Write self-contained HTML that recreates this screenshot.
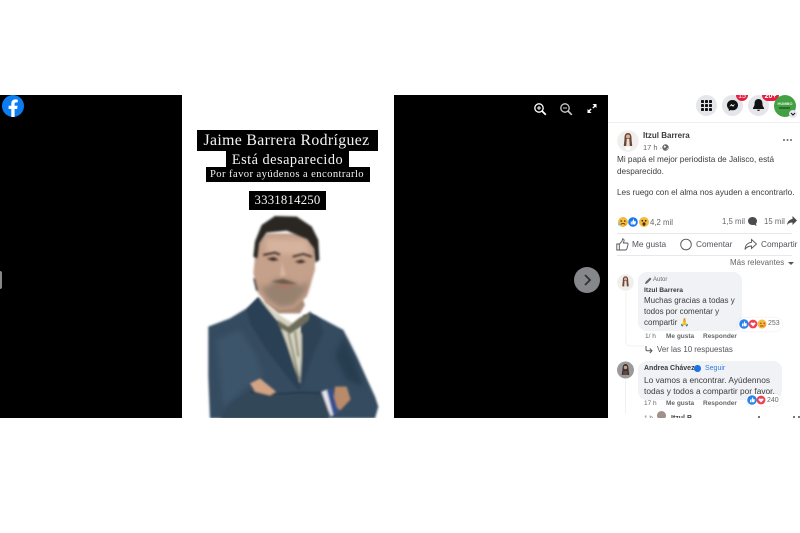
<!DOCTYPE html>
<html lang="es"><head><meta charset="utf-8"><style>
html,body{margin:0;padding:0;background:#fff}
#p{position:relative;width:800px;height:533px;overflow:hidden;background:#fff;font-family:"Liberation Sans",sans-serif;filter:blur(.3px)}
#p div,#p span.a{position:absolute;white-space:nowrap}
.b{background:#000}
.s{font-family:"Liberation Serif",serif;color:#f4f4f4;text-align:center}
.t{font-size:8.200px;color:#3a3b3d;line-height:12px}
.g{color:#65676b}
.h{font-weight:bold}
svg{position:absolute;overflow:visible}
</style></head><body><div id="p">
<div class="b" style="left:0;top:95px;width:182px;height:323px"></div>
<div class="b" style="left:394px;top:95px;width:214px;height:323px"></div>
<div style="left:0;top:271px;width:2px;height:18px;background:#888;border-radius:0 9px 9px 0"></div>
<svg style="left:2px;top:95px" width="22" height="22" viewBox="0 0 22 22"><circle cx="11" cy="11" r="11" fill="#0b7cf2"/><path d="M9.3 22v-8H6.6v-3.2h2.7V8.700c0-2.800 1.600-4.300 4.100-4.300.8 0 1.700.1 2.300.2v2.800h-1.400c-1.300 0-1.700.8-1.700 1.600v1.800h3l-.5 3.200h-2.500v8z" fill="#fff"/></svg>

<div class="b" style="left:197px;top:130px;width:181px;height:21px"></div>
<div class="b" style="left:226px;top:151px;width:123px;height:16px"></div>
<div class="b" style="left:206px;top:167px;width:164px;height:15px"></div>
<div class="b" style="left:249px;top:191px;width:77px;height:19px"></div>
<div class="s" style="left:196px;top:131px;width:181px;font-size:15.800px;line-height:20px;letter-spacing:.35px">Jaime Barrera Rodríguez</div>
<div class="s" style="left:226px;top:151px;width:123px;font-size:14.300px;line-height:18px;letter-spacing:.5px">Está desaparecido</div>
<div class="s" style="left:205px;top:168px;width:164px;font-size:10.600px;line-height:14px;letter-spacing:.42px">Por favor ayúdenos a encontrarlo</div>
<div class="s" style="left:249px;top:191px;width:77px;font-size:12.800px;line-height:19px;letter-spacing:.2px">3331814250</div>

<svg style="left:0;top:0" width="800" height="533" viewBox="0 0 800 533"><defs><filter id="f" x="-10%" y="-10%" width="120%" height="120%"><feGaussianBlur stdDeviation="3"/></filter><filter id="f2" x="-20%" y="-20%" width="140%" height="140%"><feGaussianBlur stdDeviation="8"/></filter><clipPath id="c"><rect x="-20" y="-20" width="620" height="645"/></clipPath></defs>
<g transform="translate(200 210) scale(.33333)" clip-path="url(#c)">
<g filter="url(#f)">
<path d="M25 350L90 325 140 295 175 262 240 340 300 375 310 315 345 315 430 360 470 440 525 560 535 590 525 625H30L25 500z" fill="#344c61"/>
</g>
<g filter="url(#f2)">
<path d="M50 390L120 360 165 430 190 500 140 530 70 590z" fill="#3c556a"/>
<path d="M430 380L465 450 490 530 440 510 405 440z" fill="#283d50"/>
</g>
<g filter="url(#f)">
<path d="M175 262L140 300 150 340 200 420 270 510 300 545 300 520 260 400 235 340z" fill="#2a3f54"/>
<path d="M310 320L330 305 360 330 370 370 345 420 310 520 305 545 305 440 300 380z" fill="#2d4256"/>
<path d="M175 262L235 335 260 400 300 520 305 440 305 375 295 350 230 310z" fill="#d4d2bf"/>
<path d="M265 370L282 440 298 510M285 365L295 440" stroke="#77795f" stroke-width="5" fill="none"/>
<path d="M230 328L265 350 300 322 330 310 325 332 300 352 270 372 238 352z" fill="#6e6c5a"/>
<path d="M195 275L235 310 300 310 315 285 300 250 200 250z" fill="#a98a76"/>
<path d="M150 545L240 558 385 552 385 625 60 625 90 580z" fill="#304659"/>
<path d="M150 545L240 552 300 548 380 550" stroke="#1f3040" stroke-width="4" fill="none"/>
<path d="M150 520L180 505 228 545 210 556 165 545z" fill="#d2a385"/>
<path d="M405 530L440 530 452 568 420 602 400 580z" fill="#b98b6b"/>
<path d="M365 545L382 538 410 610 392 620z" fill="#e6e6ee"/>
<path d="M380 540L395 535 415 605 400 618z" fill="#34508f"/>
</g>
<g filter="url(#f)">
<path d="M165 140L160 190 175 250 200 280 240 300 280 295 320 260 345 180 345 100 300 70 200 70 175 100z" fill="#c5a08a"/>
</g>
<g filter="url(#f2)">
<path d="M195 85L320 90 330 135 200 130z" fill="#d6b39e"/>
<path d="M178 225L203 268 240 292 280 286 316 248 328 210 305 228 270 212 230 206 198 232z" fill="#97826f"/>
</g>
<g filter="url(#f)">
<path d="M214 215L250 207 292 222 250 222z" fill="#6f5a4a"/>
<path d="M222 229L255 226 285 229 255 238z" fill="#ad7666"/>
<path d="M200 146L222 141 236 150 218 153z M284 155L305 149 318 156 300 160z" fill="#3d2c25"/>
<path d="M190 135L225 128 240 134M278 140L310 132 335 140" stroke="#30221c" stroke-width="5" fill="none"/>
<path d="M245 155L258 195 240 200z" fill="#d6b5a0"/>
<path d="M160 140L165 95 185 45 225 18 290 20 335 50 355 90 358 150 346 158 342 115 322 88 260 62 200 68 178 100 172 145z" fill="#292524"/>
<path d="M160 205L168 240 175 245 165 205z" fill="#332b28"/>
</g>
</g></svg>

<svg style="left:533px;top:102px" width="66" height="14" viewBox="0 0 66 14" fill="none" stroke="#fff" stroke-width="1.300"><circle cx="6" cy="6" r="4.200"/><path d="M9 9l3.800 3.800" stroke-width="1.800"/><path d="M4 6h4M6 4v4" stroke-width="1"/><g stroke="#ccc"><circle cx="32" cy="6" r="4.200"/><path d="M35 9l3.800 3.800" stroke-width="1.600"/><path d="M30 6h4" stroke-width="1"/></g><path d="M59.500 1.500h4v4l-1.300-1.300-1.800 1.800-1-1 1.800-1.800zM58.500 10.500h-4v-4l1.300 1.300 1.800-1.800 1 1-1.800 1.800z" fill="#fff" stroke="none" transform="translate(0 .5)"/></svg>
<div style="left:574px;top:267px;width:26px;height:26px;border-radius:50%;background:#85878a"></div>
<svg style="left:574px;top:267px" width="26" height="26" viewBox="0 0 26 26" fill="none"><path d="M11 8l5 5-5 5" stroke="#2e3033" stroke-width="1.800"/></svg>

<!-- Top bar -->
<div style="left:608px;top:122px;width:192px;height:1px;background:#eceef0"></div>
<div style="left:696px;top:95px;width:21px;height:21px;border-radius:50%;background:#e4e6eb"></div>
<svg style="left:701px;top:100px" width="11" height="11" viewBox="0 0 11 11" fill="#111"><rect x="0" y="0" width="3" height="3" rx=".8"/><rect x="4" y="0" width="3" height="3" rx=".8"/><rect x="8" y="0" width="3" height="3" rx=".8"/><rect x="0" y="4" width="3" height="3" rx=".8"/><rect x="4" y="4" width="3" height="3" rx=".8"/><rect x="8" y="4" width="3" height="3" rx=".8"/><rect x="0" y="8" width="3" height="3" rx=".8"/><rect x="4" y="8" width="3" height="3" rx=".8"/><rect x="8" y="8" width="3" height="3" rx=".8"/></svg>
<div style="left:722px;top:95px;width:21px;height:21px;border-radius:50%;background:#e4e6eb"></div>
<svg style="left:727px;top:100px" width="11" height="11" viewBox="0 0 11 11"><path d="M5.500 0C2.400 0 0 2.200 0 5.200c0 1.600.7 2.900 1.800 3.800V11l1.900-1c.6.200 1.200.3 1.800.3 3.100 0 5.500-2.200 5.500-5.100S8.600 0 5.500 0z" fill="#111"/><path d="M2.300 6.800l2-2.800 1.600 1.300 2.200-1.300-2 2.800-1.600-1.300z" fill="#fff"/></svg>
<div style="left:748px;top:95px;width:21px;height:21px;border-radius:50%;background:#e4e6eb"></div>
<svg style="left:753px;top:99px" width="11" height="13" viewBox="0 0 11 13" fill="#111"><path d="M5.500 0C3 0 1.600 1.900 1.600 4.300c0 2.600-.8 3.600-1.600 4.700v1h11V9c-.8-1.100-1.600-2.100-1.600-4.700C9.400 1.900 8 0 5.500 0z"/><path d="M3.800 10.800a1.800 1.800 0 0 0 3.400 0z"/></svg>
<div style="left:736px;top:95px;width:12px;height:6px;border-radius:0 0 6px 6px;background:#e41e3f;overflow:hidden"><span class="a" style="left:0;top:-3px;width:12px;font-size:7px;line-height:9px;color:#fff;text-align:center">15</span></div>
<div style="left:762px;top:95px;width:17px;height:6px;border-radius:0 0 6px 6px;background:#e41e3f;overflow:hidden"><span class="a" style="left:0;top:-3px;width:17px;font-size:7px;line-height:9px;color:#fff;text-align:center;font-weight:bold">20+</span></div>
<div style="left:774px;top:95px;width:22px;height:22px;border-radius:50%;background:#43a144"></div>
<div style="left:774px;top:101px;width:22px;font-size:4px;line-height:6px;color:#e8f4e8;text-align:center;font-weight:bold">HUMBO</div>
<div style="left:779px;top:107px;width:11px;height:1.500px;background:#2c6b2e"></div>
<div style="left:789px;top:110px;width:8px;height:8px;border-radius:50%;background:#e4e6eb"></div>
<svg style="left:789px;top:110px" width="8" height="8" viewBox="0 0 8 8" fill="none"><path d="M2 3l2 2 2-2" stroke="#111" stroke-width="1"/></svg>

<!-- Post header -->
<svg style="left:617px;top:130px" width="22" height="22" viewBox="0 0 22 22"><circle cx="11" cy="11" r="10.800" fill="#f1efed"/><path d="M7.500 8c0-3.500 1.300-5 3.500-5s3.500 1.500 3.500 5c0 3 .7 6 .7 8l-8.400 0c0-2 .7-5 .7-8z" fill="#6a4636"/><circle cx="11" cy="6.500" r="2" fill="#d9b09a"/><path d="M9.700 9h2.600l.5 7.500h-3.600z" fill="#eadfd8"/><path d="M8.500 16.500h5l-.5 3.500h-4z" fill="#fff"/></svg>
<div class="t h" style="left:643px;top:130px;font-size:8px;color:#3a3b3d;line-height:12px">Itzul Barrera</div>
<div class="t g" style="left:643px;top:142px;font-size:7.500px;line-height:11px">17 h ·</div>
<svg style="left:662px;top:144px" width="7" height="7" viewBox="0 0 7 7"><circle cx="3.500" cy="3.500" r="3.200" fill="#65676b"/><path d="M2 1.500l2 .7-.7 1.600-1.500-.3zM5 4l1 .5-1.500 1.500z" fill="#fff"/></svg>
<div style="left:783px;top:139px;width:2.400px;height:2.400px;border-radius:50%;background:#65676b;box-shadow:3.500px 0 0 #65676b,7px 0 0 #65676b"></div>

<div class="t" style="left:617px;top:154px;line-height:12px">Mi papá el mejor periodista de Jalisco, está<br>desparecido.</div>
<div class="t" style="left:617px;top:187px;line-height:12px">Les ruego con el alma nos ayuden a encontrarlo.</div>

<!-- Reactions -->
<svg style="left:617px;top:216px" width="32" height="12" viewBox="0 0 32 12"><circle cx="27" cy="6" r="5" fill="#f5b93d"/><circle cx="25.300" cy="4.800" r=".9" fill="#333"/><circle cx="28.700" cy="4.800" r=".9" fill="#333"/><ellipse cx="27" cy="8" rx="1.500" ry="1.800" fill="#4a2a15"/><circle cx="16" cy="6" r="5.200" fill="#fff"/><circle cx="16" cy="6" r="4.800" fill="#1877f2"/><path d="M13.700 5.500h1.100v3h-1.100zM15.200 5.500l1.200-2.300c.7 0 .9.600.7 1.300l-.2.800h1.500c.5 0 .6.400.5.800l-.5 2c-.1.300-.3.400-.7.400h-2.500z" fill="#fff"/><circle cx="6" cy="6" r="5" fill="#f5b93d"/><circle cx="4.200" cy="5" r=".8" fill="#333"/><circle cx="7.800" cy="5" r=".8" fill="#333"/><path d="M3.800 8.500c1-1.200 3.400-1.200 4.400 0" stroke="#4a2a15" fill="none" stroke-width=".9"/><path d="M2 6.500c-1 1.500-1 2.800 0 3 1 .1 1.200-1.500 0-3z" fill="#5db0f0"/></svg>
<div class="t g" style="left:650px;top:216px;font-size:7.800px;line-height:13px">4,2 mil</div>
<div class="t g" style="left:722px;top:215px;font-size:7.800px;line-height:13px">1,5 mil</div>
<svg style="left:748px;top:217px" width="9" height="9" viewBox="0 0 9 9"><path d="M4.500 0C2 0 0 1.800 0 4s2 4 4.500 4c.6 0 1.100-.1 1.600-.3L8.500 9 8 6.700C8.600 5.900 9 5 9 4 9 1.800 7 0 4.500 0z" fill="#4a4c50"/></svg>
<div class="t g" style="left:764px;top:215px;font-size:7.800px;line-height:13px">15 mil</div>
<svg style="left:787px;top:216px" width="10" height="10" viewBox="0 0 10 10"><path d="M5.500 0l4.500 4.500L5.500 9V6.500C3 6.500 1.300 7.300 0 9c.3-3 2-5.500 5.500-6z" fill="#4a4c50"/></svg>
<div style="left:617px;top:233px;width:175px;height:1px;background:#e6e8ea"></div>

<svg style="left:616px;top:238px" width="13" height="13" viewBox="0 0 13 13" fill="none" stroke="#555" stroke-width=".9"><path d="M.8 6h2.500v6H.8zM3.300 6.300L6 3.200 6.600.8c1.300 0 1.800 1.200 1.300 2.600L7.400 5h3.600c.9 0 1.300.8 1 1.600l-1.200 4.400c-.2.600-.6 1-1.300 1H3.300"/></svg>
<div class="t" style="left:632px;top:238px;font-size:8.300px;line-height:13px;color:#52545a">Me gusta</div>
<svg style="left:680px;top:238px" width="12" height="13" viewBox="0 0 12 13" fill="none" stroke="#555" stroke-width=".9"><circle cx="6" cy="6.500" r="5.300"/></svg>
<div class="t" style="left:696px;top:238px;font-size:8.300px;line-height:13px;color:#52545a">Comentar</div>
<svg style="left:744px;top:238px" width="13" height="13" viewBox="0 0 13 13" fill="none" stroke="#555" stroke-width=".9"><path d="M7.500 1.500l5 4.500-5 4.500V8C4.500 8 2.500 9 1 11.500 1.300 7.500 3.500 4.800 7.500 4.300z"/></svg>
<div class="t" style="left:761px;top:238px;font-size:8.300px;line-height:13px;color:#52545a">Compartir</div>
<div style="left:617px;top:255px;width:175px;height:1px;background:#e6e8ea"></div>
<div class="t g" style="left:730px;top:257px;font-size:8px;line-height:12px">Más relevantes</div>
<div style="left:788px;top:262px;width:0;height:0;border:3px solid transparent;border-top:3.500px solid #555;border-bottom:0"></div>

<!-- Comment 1 -->
<svg style="left:617px;top:274px" width="17" height="17" viewBox="0 0 22 22"><circle cx="11" cy="11" r="10.800" fill="#f1efed"/><path d="M7.500 8c0-3.500 1.300-5 3.500-5s3.500 1.500 3.500 5c0 3 .7 6 .7 8l-8.400 0c0-2 .7-5 .7-8z" fill="#6a4636"/><circle cx="11" cy="6.500" r="2" fill="#d9b09a"/><path d="M9.700 9h2.600l.5 7.500h-3.600z" fill="#eadfd8"/></svg>
<svg style="left:625px;top:292px" width="22" height="58" viewBox="0 0 22 58" fill="none"><path d="M1 0v50c0 3 2 4 6 4h12" stroke="#f0f1f3"/></svg>
<div style="left:638px;top:272px;width:104px;height:59px;background:#f0f2f5;border-radius:9px"></div>
<svg style="left:645px;top:277px" width="7" height="7" viewBox="0 0 7 7"><path d="M0 7l.5-2L5 .5 6.500 2 2 6.500z" fill="#65676b"/></svg>
<div class="t g" style="left:653px;top:276px;font-size:6px;line-height:8px">Autor</div>
<div class="t h" style="left:644px;top:286px;font-size:6.700px;line-height:9px;color:#3a3b3d">Itzul Barrera</div>
<div class="t" style="left:644px;top:295px;font-size:8px;line-height:11px">Muchas gracias a todas y<br>todos por comentar y<br>compartir 🙏</div>
<div style="left:738px;top:318px;width:44px;height:13px;background:#fff;border-radius:7px;box-shadow:0 0 2px rgba(0,0,0,.1)"></div>
<svg style="left:739px;top:319px" width="28" height="10" viewBox="0 0 28 10"><circle cx="23" cy="5" r="4.500" fill="#f5b93d"/><path d="M21 4l1.500.5M26 4l-1.500.5" stroke="#8a4a20"/><path d="M21 7h3.500" stroke="#8a4a20"/><path d="M25 5.500c1.200-.4 2 .3 1.800 1.300-.2.800-1 1-1.800.7z" fill="#f28a3e"/><circle cx="14" cy="5" r="4.800" fill="#fff"/><circle cx="14" cy="5" r="4.400" fill="#ef3f55"/><path d="M14 7.500L11.800 5.300c-1-1.200.8-2.700 2.200-1.200 1.400-1.500 3.200 0 2.200 1.200z" fill="#fff"/><circle cx="5" cy="5" r="4.800" fill="#2a82ef"/><path d="M3 4.600h1v2.800H3zM4.400 4.600l1.100-2.200c.6 0 .8.500.6 1.200l-.1.700h1.300c.5 0 .6.400.5.700l-.4 1.900c-.1.300-.3.400-.6.400H4.400z" fill="#fff"/></svg>
<div class="t g" style="left:768px;top:319px;font-size:7px;line-height:10px">253</div>
<div class="t g" style="left:645px;top:332px;font-size:6.500px;line-height:10px">1/ h</div>
<div class="t h g" style="left:666px;top:332px;font-size:6.500px;line-height:10px">Me gusta</div>
<div class="t h g" style="left:703px;top:332px;font-size:6.500px;line-height:10px">Responder</div>
<svg style="left:645px;top:346px" width="8" height="8" viewBox="0 0 8 8" fill="none" stroke="#555" stroke-width="1"><path d="M1 0v3.500c0 .8.500 1.200 1.200 1.200H7M4.800 2.500L7 4.700 4.800 7"/></svg>
<div class="t" style="left:657px;top:344px;font-size:7.900px;line-height:12px;color:#52545a">Ver las 10 respuestas</div>

<!-- Comment 2 -->
<svg style="left:617px;top:361px" width="17" height="18" viewBox="0 0 17 18"><circle cx="8.500" cy="9" r="8.500" fill="#9a9a9c"/><path d="M5.500 8c0-3 1-5 3-5s3 2 3 5c0 2 .7 4 .7 6H4.800c0-2 .7-4 .7-6z" fill="#3e2f2a"/><circle cx="8.500" cy="6.500" r="1.700" fill="#caa08c"/><path d="M6.500 10h4l.5 4H6z" fill="#5b4b46"/></svg>
<div style="left:625px;top:380px;width:1px;height:34px;background:#f0f1f3"></div>
<div style="left:638px;top:361px;width:144px;height:39px;background:#f0f2f5;border-radius:9px"></div>
<div class="t h" style="left:644px;top:364px;font-size:7px;line-height:10px;color:#3a3b3d">Andrea Chávez</div>
<div style="left:694px;top:365px;width:6.500px;height:6.500px;border-radius:50%;background:#1b74e4"></div>
<div class="t" style="left:705px;top:364px;font-size:7px;line-height:10px;color:#2f7fe0">Seguir</div>
<div class="t" style="left:644px;top:375px;font-size:8.350px;line-height:10.500px">Lo vamos a encontrar. Ayúdennos<br>todas y todos a compartir por favor.</div>
<div style="left:746px;top:394px;width:35px;height:12px;background:#fff;border-radius:7px;box-shadow:0 0 2px rgba(0,0,0,.1)"></div>
<svg style="left:747px;top:395px" width="19" height="10" viewBox="0 0 19 10"><circle cx="14" cy="5" r="4.800" fill="#fff"/><circle cx="14" cy="5" r="4.400" fill="#ef3f55"/><path d="M14 7.500L11.800 5.300c-1-1.200.8-2.700 2.200-1.200 1.400-1.500 3.200 0 2.200 1.200z" fill="#fff"/><circle cx="5" cy="5" r="4.800" fill="#2a82ef"/><path d="M3 4.600h1v2.800H3zM4.400 4.600l1.100-2.200c.6 0 .8.500.6 1.200l-.1.700h1.300c.5 0 .6.400.5.700l-.4 1.900c-.1.300-.3.400-.6.400H4.400z" fill="#fff"/></svg>
<div class="t g" style="left:767px;top:396px;font-size:7px;line-height:10px">240</div>
<div class="t g" style="left:644px;top:399px;font-size:6.500px;line-height:10px">17 h</div>
<div class="t h g" style="left:666px;top:399px;font-size:6.500px;line-height:10px">Me gusta</div>
<div class="t h g" style="left:703px;top:399px;font-size:6.500px;line-height:10px">Responder</div>
<div style="left:608px;top:411px;width:192px;height:7px;overflow:hidden">
<span class="a" style="left:36px;top:3px;font-size:6.500px;line-height:10px;color:#65676b">1 h</span>
<span class="a" style="left:49px;top:0;width:9px;height:9px;border-radius:50%;background:#a0908a"></span>
<span class="a" style="left:63px;top:3px;font-size:7px;line-height:10px;color:#3a3b3d;font-weight:bold">Itzul B</span>
<span class="a" style="left:150px;top:5px;width:2px;height:2px;background:#777"></span>
<span class="a" style="left:185px;top:5px;width:2px;height:2px;background:#777;box-shadow:5px 0 0 #777"></span>
</div>
<div style="left:0;top:418px;width:800px;height:115px;background:#fff"></div>
</div></body></html>
